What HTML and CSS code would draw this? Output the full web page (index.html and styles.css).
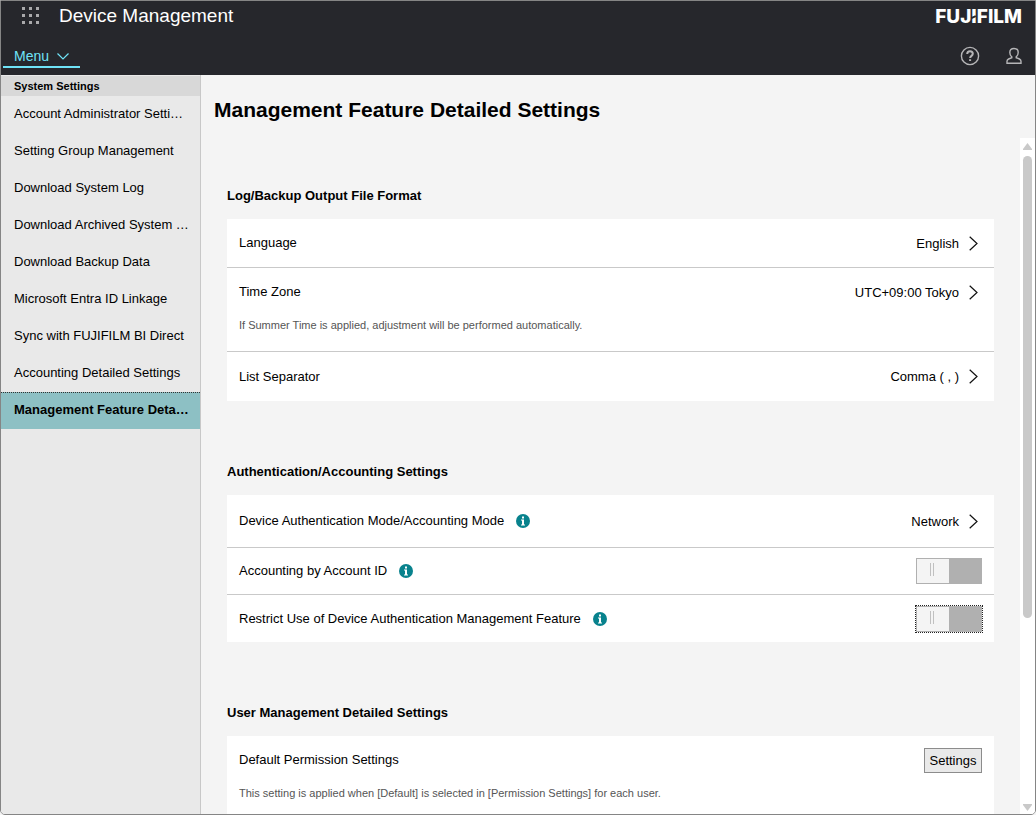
FILE: index.html
```html
<!DOCTYPE html>
<html lang="en">
<head>
  <meta charset="UTF-8">
  <title>Device Management</title>
  <link rel="stylesheet" href="styles.css">
</head>
<body>
  <header class="header">
    <div class="header-row">
      <button type="button" class="icon-btn apps" aria-label="Applications">
        <svg width="18" height="18" viewBox="0 0 18 18" fill="#a9a9ab">
          <path d="M0 0h3v3H0zM7 0h3v3H7zM14 0h3v3h-3zM0 7h3v3H0zM7 7h3v3H7zM14 7h3v3h-3zM0 14h3v3H0zM7 14h3v3H7zM14 14h3v3h-3z"/>
        </svg>
      </button>
      <div class="app-title">Device Management</div>
      <div class="brand">FUJ<span class="brand-cut">I</span>FILM</div>
    </div>
    <div class="header-row header-tools">
      <button type="button" class="menu-btn">
        Menu
        <svg width="12" height="7" viewBox="0 0 12 7" fill="none" stroke="currentColor" stroke-width="1.2"><path d="M.5.5 6 6 11.5.5"/></svg>
      </button>
      <div class="tools">
        <button type="button" class="icon-btn" aria-label="Help">
          <svg width="20" height="20" viewBox="0 0 20 20" fill="none" stroke="#b5b5b7" stroke-width="1.4">
            <circle cx="10" cy="10" r="8.6"/>
            <path stroke-width="2" d="M7.2 8.1C7.2 6.300 8.400 5.300 10 5.300s2.800.9 2.800 2.500c0 2.100-2.700 2.100-2.700 4.300M10.100 13.200v1.900"/>
          </svg>
        </button>
        <button type="button" class="icon-btn" aria-label="User">
          <svg width="16" height="18" viewBox="0 0 16 18" fill="none" stroke="#b5b5b7" stroke-width="1.4">
            <path d="M8 1.500c-2.500 0-4.200 1.600-4.200 4 0 2 .8 3.400 2 4.400v.8L2.600 12C1.500 12.500 1 13.200 1 14.300v2h14v-2c0-1.100-.5-1.800-1.600-2.300l-3.200-1.300v-.8c1.200-1 2-2.400 2-4.400 0-2.400-1.700-4-4.200-4z"/>
          </svg>
        </button>
      </div>
    </div>
  </header>

  <div class="layout">
    <nav class="sidebar">
      <h2 class="sidebar-title">System Settings</h2>
      <a href="#" class="nav-item">Account Administrator Setti…</a>
      <a href="#" class="nav-item">Setting Group Management</a>
      <a href="#" class="nav-item">Download System Log</a>
      <a href="#" class="nav-item">Download Archived System …</a>
      <a href="#" class="nav-item">Download Backup Data</a>
      <a href="#" class="nav-item">Microsoft Entra ID Linkage</a>
      <a href="#" class="nav-item">Sync with FUJIFILM BI Direct</a>
      <a href="#" class="nav-item">Accounting Detailed Settings</a>
      <a href="#" class="nav-item active">Management Feature Deta…</a>
    </nav>

    <main class="content">
      <h1>Management Feature Detailed Settings</h1>

      <div class="scroll-area">
        <div class="sections">
          <section>
            <h3>Log/Backup Output File Format</h3>
            <div class="card">
              <div class="row">
                <span class="label">Language</span>
                <button type="button" class="value">English
                  <svg class="arrow" viewBox="0 0 9 15"><path d="M.7.7 8 7.500.7 14.300"/></svg>
                </button>
              </div>
              <div class="row with-note">
                <span class="label">Time Zone</span>
                <button type="button" class="value">UTC+09:00 Tokyo
                  <svg class="arrow" viewBox="0 0 9 15"><path d="M.7.7 8 7.500.7 14.300"/></svg>
                </button>
                <p class="note">If Summer Time is applied, adjustment will be performed automatically.</p>
              </div>
              <div class="row">
                <span class="label">List Separator</span>
                <button type="button" class="value">Comma ( , )
                  <svg class="arrow" viewBox="0 0 9 15"><path d="M.7.7 8 7.500.7 14.300"/></svg>
                </button>
              </div>
            </div>
          </section>

          <section>
            <h3>Authentication/Accounting Settings</h3>
            <div class="card">
              <div class="row tall">
                <span class="label">Device Authentication Mode/Accounting Mode</span>
                <button type="button" class="info" aria-label="Information">
                  <svg width="14" height="14" viewBox="0 0 14 14"><circle cx="7" cy="7" r="7" fill="#08828d"/><path fill="#fff" d="M6 2.500h2v2H6zM5 5.500h3v5h1v1H5v-1h1v-4H5z"/></svg>
                </button>
                <button type="button" class="value">Network
                  <svg class="arrow" viewBox="0 0 9 15"><path d="M.7.7 8 7.500.7 14.300"/></svg>
                </button>
              </div>
              <div class="row short">
                <label class="label" for="account-id">Accounting by Account ID</label>
                <button type="button" class="info" aria-label="Information">
                  <svg width="14" height="14" viewBox="0 0 14 14"><circle cx="7" cy="7" r="7" fill="#08828d"/><path fill="#fff" d="M6 2.500h2v2H6zM5 5.500h3v5h1v1H5v-1h1v-4H5z"/></svg>
                </button>
                <input type="checkbox" class="switch" id="account-id">
              </div>
              <div class="row">
                <label class="label" for="restrict">Restrict Use of Device Authentication Management Feature</label>
                <button type="button" class="info" aria-label="Information">
                  <svg width="14" height="14" viewBox="0 0 14 14"><circle cx="7" cy="7" r="7" fill="#08828d"/><path fill="#fff" d="M6 2.500h2v2H6zM5 5.500h3v5h1v1H5v-1h1v-4H5z"/></svg>
                </button>
                <input type="checkbox" class="switch focused" id="restrict">
              </div>
            </div>
          </section>

          <section>
            <h3>User Management Detailed Settings</h3>
            <div class="card">
              <div class="row with-note">
                <span class="label">Default Permission Settings</span>
                <button type="button" class="settings-btn">Settings</button>
                <p class="note">This setting is applied when [Default] is selected in [Permission Settings] for each user.</p>
              </div>
            </div>
          </section>
        </div>

        <div class="scrollbar" aria-hidden="true">
          <svg width="9" height="7" viewBox="0 0 9 7"><path fill="#c9c9c9" d="M4.500 0 9 6v1H0V6z"/></svg>
          <div class="track"><div class="thumb"></div></div>
          <svg width="9" height="7" viewBox="0 0 9 7"><path fill="#c9c9c9" d="M4.500 7 9 1V0H0v1z"/></svg>
        </div>
      </div>
    </main>
  </div>
</body>
</html>
```
FILE: styles.css
```css
* {
  box-sizing: border-box;
}

body {
  margin: 0;
  height: 100vh;
  display: flex;
  flex-direction: column;
  overflow: hidden;
  border: 1px solid #858585;
  border-radius: 0 0 5px 5px;
  background: #f4f4f4;
  color: #000;
  font-family: "Liberation Sans", Arial, sans-serif;
  font-size: 13px;
}

button {
  font: inherit;
  color: inherit;
  background: none;
  border: 0;
  padding: 0;
  cursor: pointer;
}

svg {
  display: block;
}

/* header */
.header {
  flex: none;
  background: #26272c;
  color: #fff;
}

.header-row {
  display: flex;
  align-items: center;
  height: 30px;
  padding: 0 13px 0 21px;
}

.app-title {
  margin-left: 19px;
  font-size: 19px;
}

.brand {
  margin-left: auto;
  font-family: Inter, "Liberation Sans", sans-serif;
  font-size: 19px;
  font-weight: 800;
}

.brand-cut {
  position: relative;
}

.brand-cut::after {
  content: "";
  position: absolute;
  left: 0;
  right: 0;
  top: 50%;
  height: 2px;
  background: #26272c;
  transform: rotate(-25deg);
}

.header-tools {
  height: 44px;
  justify-content: space-between;
  padding-top: 6px;
  padding-left: 2px;
}

.menu-btn {
  display: flex;
  align-items: center;
  gap: 8px;
  width: 77px;
  height: 24px;
  padding: 2px 0 0 11px;
  border-bottom: 2px solid #6fe3f7;
  color: #6fe3f7;
  font-size: 14px;
}

.tools {
  display: flex;
  align-items: center;
  gap: 26px;
}

/* layout */
.layout {
  flex: 1;
  min-height: 0;
  display: flex;
}

.sidebar {
  flex: none;
  width: 200px;
  padding-top: 1px;
  background: #e9e9e9;
  border-right: 1px solid #c8c8c8;
}

.sidebar-title {
  margin: 0;
  padding-left: 13px;
  background: #d8d8d8;
  font-size: 11px;
  line-height: 20px;
}

.nav-item {
  display: block;
  height: 37px;
  padding-left: 13px;
  color: #000;
  line-height: 35px;
  text-decoration: none;
  white-space: nowrap;
}

.nav-item.active {
  border-top: 1px dotted #333;
  background: #8dc0c4;
  font-weight: bold;
  line-height: 33px;
}

.content {
  flex: 1;
  min-width: 0;
  display: flex;
  flex-direction: column;
}

h1 {
  margin: 0;
  padding: 23px 13px 16px;
  font-size: 21px;
  line-height: 24px;
}

.scroll-area {
  flex: 1;
  min-height: 0;
  display: flex;
  overflow: hidden;
}

.sections {
  flex: 1;
  padding: 46px 26px 0;
}

section {
  margin-bottom: 59px;
}

h3 {
  margin: 0 0 11px;
  font-size: 13px;
  line-height: 24px;
}

/* setting rows */
.card {
  background: #fff;
}

.row {
  display: flex;
  flex-wrap: wrap;
  align-items: center;
  min-height: 48px;
  padding: 0 12px;
}

.row + .row {
  border-top: 1px solid #c9c9c9;
}

.row.tall {
  min-height: 52px;
}

.row.short {
  min-height: 47px;
}

.row.with-note {
  align-content: flex-start;
  min-height: 84px;
  padding-top: 11px;
}

.with-note + .row {
  min-height: 50px;
}

.label {
  line-height: 26px;
}

.value {
  display: flex;
  align-items: center;
  gap: 10px;
  margin-left: auto;
  padding-right: 4px;
}

.arrow {
  width: 9px;
  height: 15px;
  fill: none;
  stroke: #111;
  stroke-width: 1.2;
}

.info {
  margin-left: 12px;
}

.note {
  width: 100%;
  margin: 12px 0 0;
  color: #555;
  font-size: 11px;
  line-height: 16px;
}

.switch {
  appearance: none;
  width: 66px;
  height: 26px;
  margin: 0 0 0 auto;
  border: 1px solid #b0b0b0;
  background:
    linear-gradient(#c0c0c0, #c0c0c0) 13px 4px / 1px 13px no-repeat,
    linear-gradient(#c0c0c0, #c0c0c0) 16px 4px / 1px 13px no-repeat,
    linear-gradient(to right, #f4f4f4 50%, #b0b0b0 50%);
}

.switch:checked {
  background: #08828d;
}

.switch.focused {
  outline: 1px dotted #222;
}

.settings-btn {
  width: 58px;
  height: 25px;
  margin-left: auto;
  border: 1px solid #8c8c8c;
  background: #e9e9e9;
}

/* scrollbar */
.scrollbar {
  flex: none;
  display: flex;
  flex-direction: column;
  align-items: center;
  gap: 6px;
  width: 15px;
  padding: 5px 0 3px;
  background: #fff;
}

.track {
  flex: 1;
}

.thumb {
  width: 9px;
  height: 72%;
  border-radius: 5px;
  background: #c9c9c9;
}
```
